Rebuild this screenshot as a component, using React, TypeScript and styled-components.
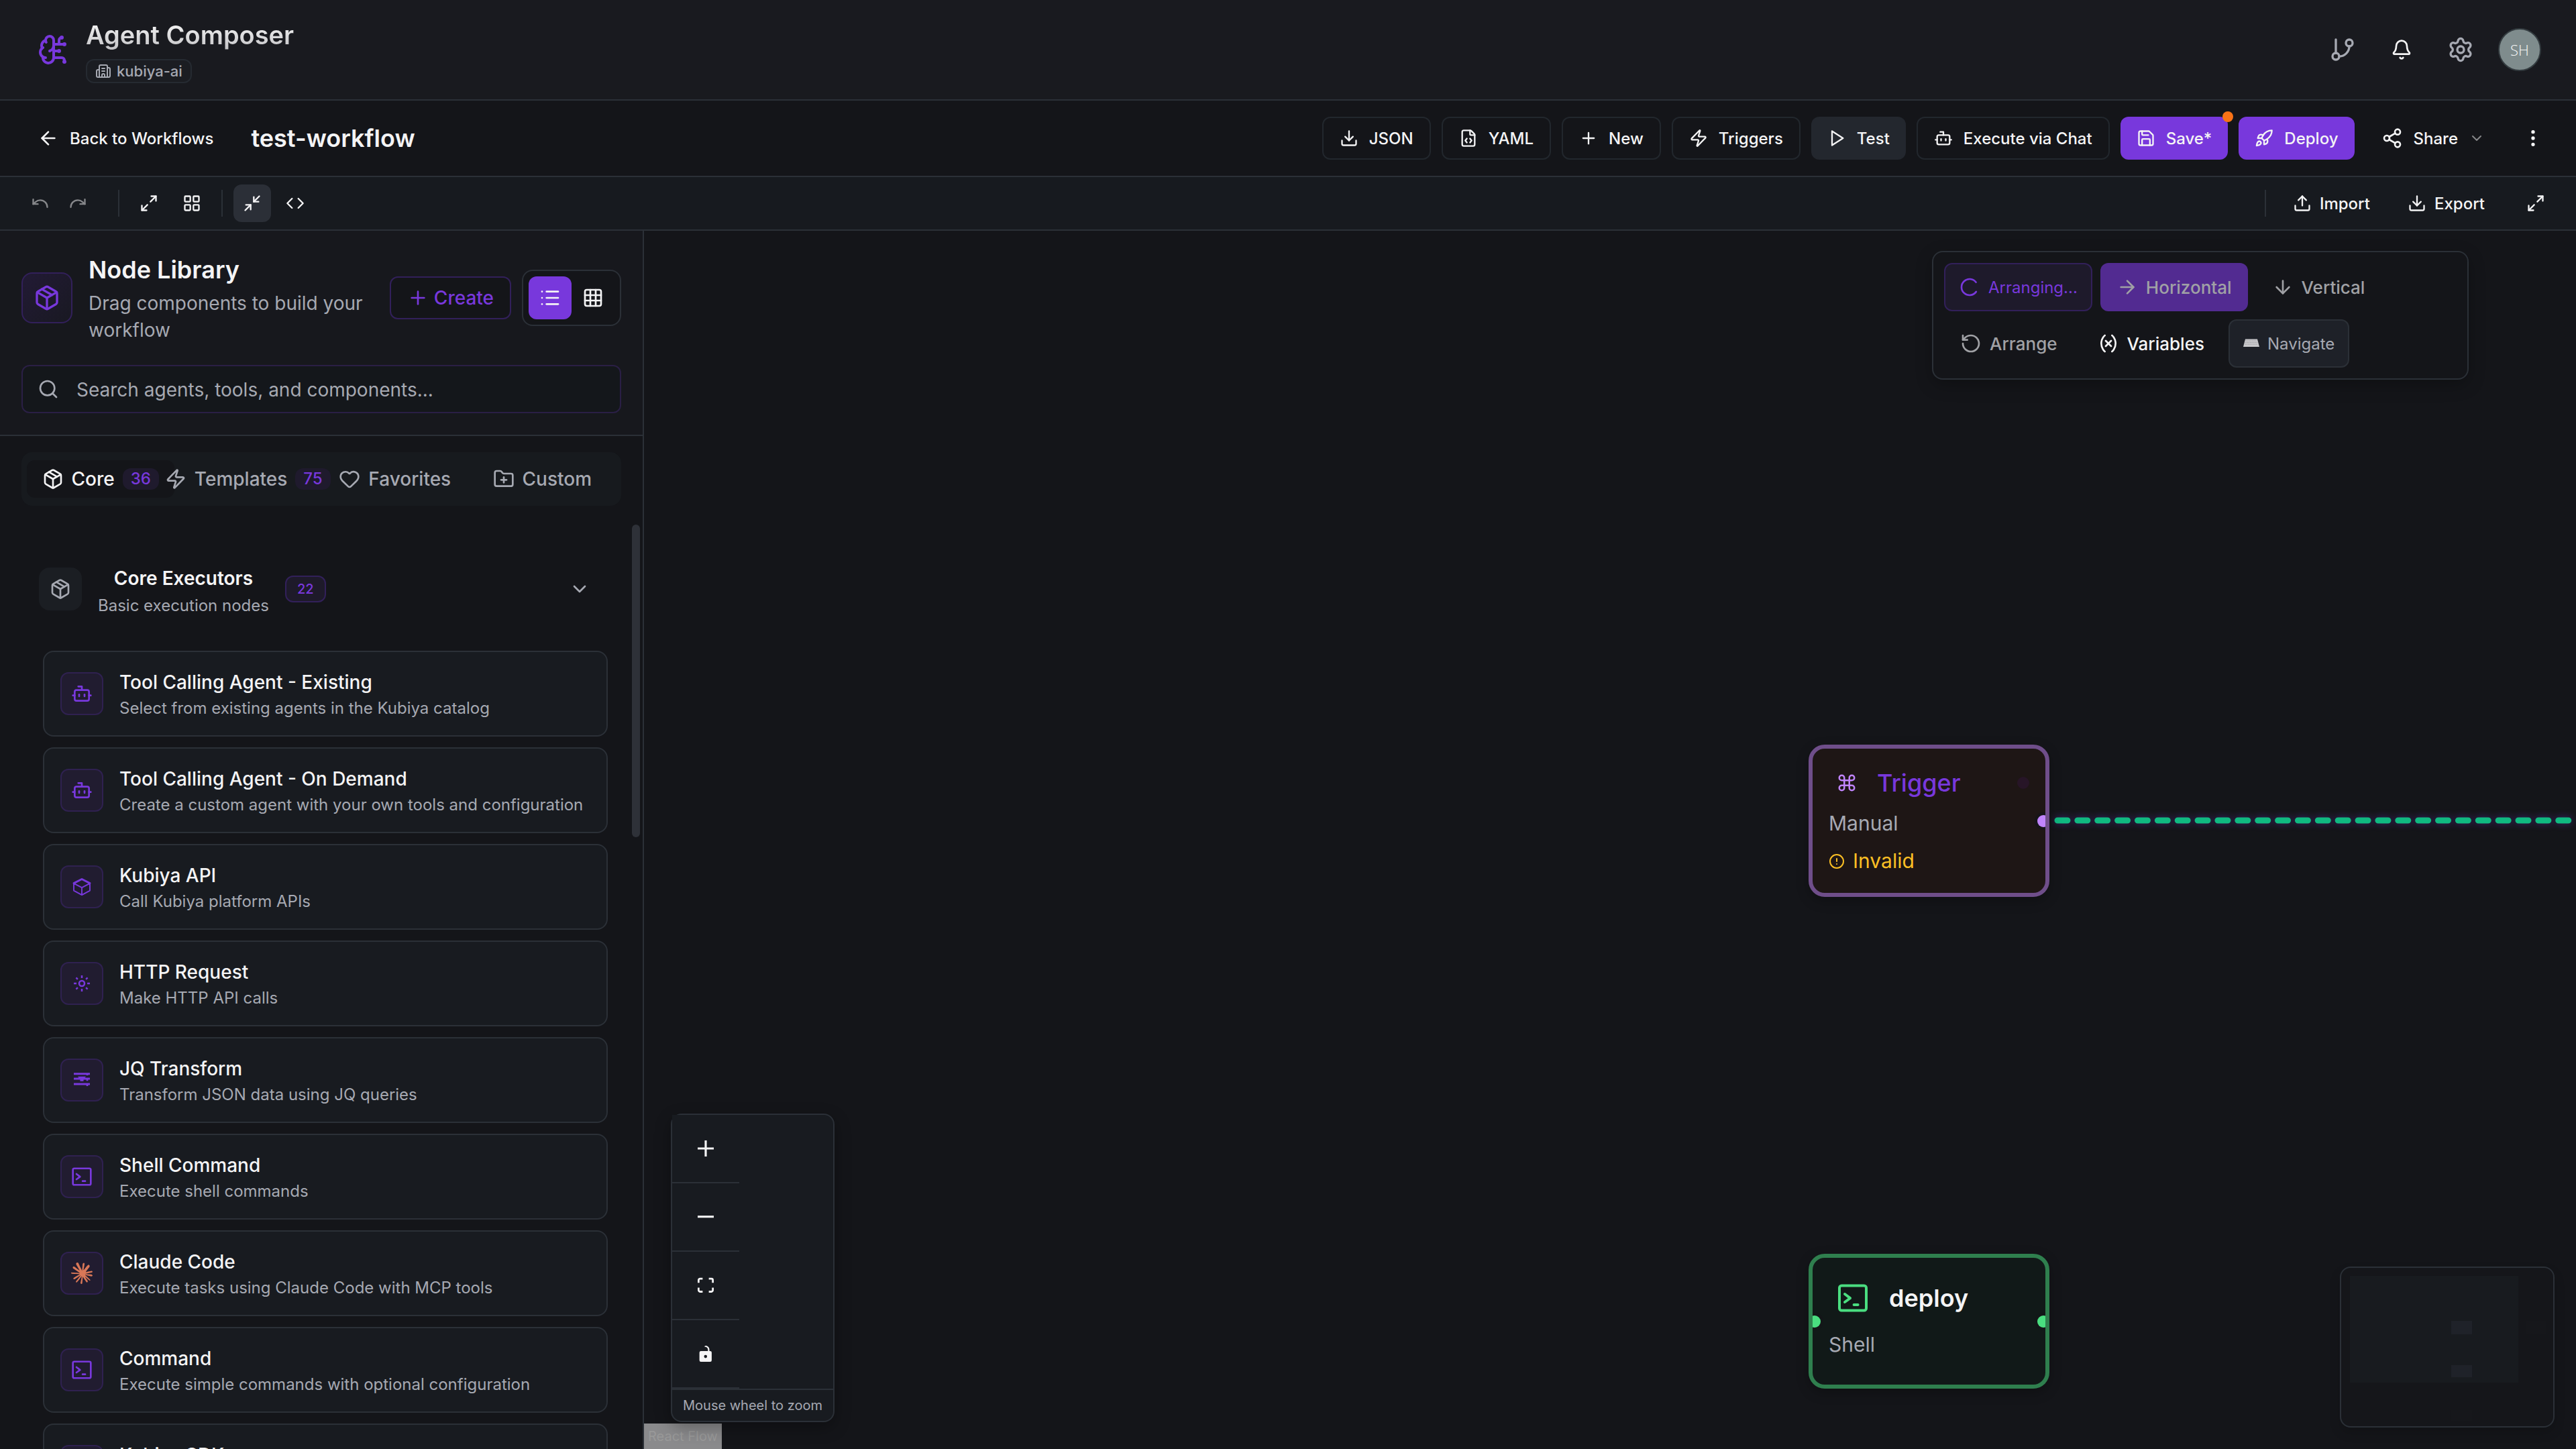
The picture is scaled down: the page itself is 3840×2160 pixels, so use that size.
import React from "react";
import styled, { createGlobalStyle, css } from "styled-components";
import {
  ArrowDown,
  ArrowLeft,
  ArrowRight,
  Bell,
  Bot,
  BrainCircuit,
  Building2,
  ChevronDown,
  CircleAlert,
  Code,
  Command,
  Download,
  EllipsisVertical,
  FileCode,
  FolderPlus,
  GitBranch,
  Grid3x3,
  Heart,
  LayoutGrid,
  List,
  LoaderCircle,
  Maximize2,
  Minimize2,
  Package,
  Plus,
  Redo,
  Rocket,
  RotateCcw,
  Save,
  Search,
  Settings,
  Share2,
  Undo,
  Upload,
  Variable,
  Zap,
} from "lucide-react";
import { SiClaude } from "react-icons/si";

const color = {
  bg: "#141519",
  header: "#191a1f",
  panel: "#17181d",
  card: "#181b20",
  raised: "#1f2229",
  line: "#2b3037",
  lineSoft: "#22272d",
  text: "#f4f4f5",
  muted: "#a6a9b2",
  accent: "#7838dc",
  accentLine: "#32205a",
  accentSoft: "#211c30",
};

const GlobalStyle = createGlobalStyle`
  *, *::before, *::after { box-sizing: border-box; }
  html, body { margin: 0; background: ${color.bg}; }
  body {
    font-family: Inter, "Liberation Sans", sans-serif;
    color: ${color.text};
    -webkit-font-smoothing: antialiased;
  }
  h1, h2, h3, p { margin: 0; }
  button, input { font: inherit; color: inherit; }
  svg { display: block; flex: none; }
`;

/* ---------- page frame ---------- */

const Page = styled.div`
  display: flex;
  flex-direction: column;
  height: 100vh;
  overflow: hidden;
`;

const Bar = styled.header<{ $bg: string; $pad: number; $height: number }>`
  display: flex;
  align-items: center;
  justify-content: space-between;
  flex: none;
  height: ${(p) => p.$height}px;
  padding: 0 ${(p) => p.$pad}px;
  background: ${(p) => p.$bg};
  border-bottom: 2px solid ${color.line};
`;

const Row = styled.div<{ $gap: number }>`
  display: flex;
  align-items: center;
  gap: ${(p) => p.$gap}px;
`;

const Body = styled.div`
  display: flex;
  flex: 1;
  min-height: 0;
`;

/* ---------- app header ---------- */

const Brand = styled.div`
  display: flex;
  align-items: center;
  gap: 24px;
  padding-left: 8px;
  color: ${color.accent};
`;

const BrandText = styled.div`
  display: flex;
  flex-direction: column;
  align-items: flex-start;
  gap: 8px;
`;

const AppTitle = styled.h1`
  font-size: 38px;
  line-height: 56px;
  font-weight: 600;
  background: linear-gradient(180deg, #fafafa 10%, #c2c2c5 90%);
  background-clip: text;
  color: transparent;
`;

const OrgBadge = styled.span`
  display: flex;
  align-items: center;
  gap: 8px;
  height: 36px;
  padding: 0 12px;
  border: 2px solid #252a31;
  border-radius: 12px;
  background: #1b1d22;
  color: ${color.muted};
  font-size: 22px;
  font-weight: 500;
`;

const HeaderIcon = styled.button<{ $bright?: boolean }>`
  display: grid;
  place-items: center;
  width: 72px;
  height: 72px;
  padding: 0;
  border: 0;
  background: none;
  color: ${(p) => (p.$bright ? color.text : color.muted)};
`;

const Avatar = styled.span`
  display: grid;
  place-items: center;
  width: 64px;
  height: 64px;
  border: 2px solid #343c40;
  border-radius: 50%;
  background: #7f8c8d;
  color: #f6f7f7;
  font: 300 22px "Open Sans", "Noto Sans", sans-serif;
`;

/* ---------- workflow bar ---------- */

const BackLink = styled.a`
  display: flex;
  align-items: center;
  gap: 16px;
  padding: 0 24px;
  color: ${color.text};
  font-size: 24px;
  font-weight: 500;
  text-decoration: none;
`;

const WorkflowName = styled.h2`
  font-size: 36px;
  line-height: 44px;
  font-weight: 600;
`;

type Tone = "outline" | "solid" | "primary" | "ghost";

const tones = {
  outline: css`
    border: 2px solid ${color.lineSoft};
    background: transparent;
  `,
  solid: css`
    border: 0;
    background: #23272e;
  `,
  primary: css`
    border: 0;
    background: ${color.accent};
  `,
  ghost: css`
    border: 0;
    background: transparent;
  `,
};

const ActionButton = styled.button<{ $tone: Tone }>`
  position: relative;
  display: flex;
  align-items: center;
  gap: 16px;
  height: 64px;
  padding: 0 24px;
  border-radius: 12px;
  font-size: 24px;
  font-weight: 500;
  white-space: nowrap;
  ${(p) => tones[p.$tone]}
`;

const UnsavedDot = styled.span`
  position: absolute;
  top: -8px;
  right: -8px;
  width: 16px;
  height: 16px;
  border-radius: 50%;
  background: #f97316;
`;

const SquareButton = styled.button<{ $size: number; $active?: boolean; $dim?: boolean }>`
  display: grid;
  place-items: center;
  width: ${(p) => p.$size}px;
  height: ${(p) => p.$size}px;
  padding: 0;
  border: 0;
  border-radius: 12px;
  background: ${(p) => (p.$active ? "#2b2f37" : "transparent")};
  opacity: ${(p) => (p.$dim ? 0.5 : 1)};
`;

/* ---------- tool strip ---------- */

const Separator = styled.span`
  width: 2px;
  height: 40px;
  background: ${color.line};
`;

const History = styled.div`
  display: flex;
  padding-right: 16px;
`;

const TransferButton = styled.button`
  display: flex;
  align-items: center;
  gap: 12px;
  height: 56px;
  padding: 0 24px;
  border: 0;
  background: none;
  font-size: 24px;
  font-weight: 500;
`;

const Transfers = styled.div`
  display: flex;
  gap: 8px;
  padding-right: 8px;
`;

/* ---------- sidebar ---------- */

const Sidebar = styled.aside`
  display: flex;
  flex-direction: column;
  flex: none;
  width: 25%;
  min-width: 960px;
  border-right: 2px solid ${color.line};
  background: ${color.bg};
`;

const LibraryHead = styled.div`
  display: flex;
  flex-direction: column;
  gap: 32px;
  padding: 32px;
  border-bottom: 2px solid ${color.line};
  background: ${color.panel};
`;

const LibraryIcon = styled.span`
  display: grid;
  place-items: center;
  flex: none;
  width: 76px;
  height: 76px;
  border: 2px solid ${color.accentLine};
  border-radius: 16px;
  background: linear-gradient(135deg, #221a35, #191922);
  color: ${color.accent};
`;

const LibraryTitle = styled.h2`
  padding-bottom: 4px;
  font-size: 36px;
  line-height: 52px;
  font-weight: 600;
`;

const LibraryHint = styled.p`
  color: ${color.muted};
  font-size: 28px;
  line-height: 40px;
`;

const LibraryTop = styled.div`
  display: flex;
  align-items: center;
  gap: 16px;
`;

const LibraryText = styled.div`
  flex: 1;
  min-width: 0;
  padding-left: 8px;
`;

const CreateButton = styled.button`
  display: flex;
  align-items: center;
  gap: 8px;
  height: 64px;
  padding: 0 24px;
  border: 2px solid ${color.accentLine};
  border-radius: 12px;
  background: ${color.bg};
  color: ${color.accent};
  font-size: 28px;
  font-weight: 500;
`;

const ViewSwitch = styled.div`
  display: flex;
  padding: 8px;
  border: 2px solid ${color.line};
  border-radius: 16px;
  background: ${color.bg};
`;

const ViewButton = styled.button<{ $on?: boolean }>`
  display: grid;
  place-items: center;
  width: 64px;
  height: 64px;
  padding: 0;
  border: 0;
  border-radius: 12px;
  background: ${(p) => (p.$on ? color.accent : "transparent")};
`;

const SearchBox = styled.label`
  display: flex;
  align-items: center;
  gap: 24px;
  height: 72px;
  padding: 0 22px;
  border: 2px solid #2a1f45;
  border-radius: 12px;
  background: #14171b;
  color: ${color.muted};
`;

const SearchInput = styled.input`
  flex: 1;
  min-width: 0;
  padding: 2px 0 0 2px;
  border: 0;
  outline: 0;
  background: none;
  font-size: 28px;
  line-height: 40px;
  &::placeholder { color: ${color.muted}; opacity: 1; }
`;

const Tabs = styled.div`
  display: grid;
  grid-template-columns: repeat(4, minmax(0, 1fr));
  align-items: center;
  height: 80px;
  margin: 24px 32px;
  padding: 0 8px;
  border-radius: 16px;
  background: #171a1e;
`;

const Tab = styled.button<{ $on?: boolean }>`
  display: flex;
  align-items: center;
  justify-content: center;
  gap: 12px;
  height: 56px;
  padding: 0;
  border: 0;
  border-radius: 12px;
  background: ${(p) => (p.$on ? color.bg : "transparent")};
  color: ${(p) => (p.$on ? color.text : color.muted)};
  font-size: 28px;
  font-weight: 500;
  white-space: nowrap;
`;

const TabCount = styled.span`
  height: 32px;
  padding: 0 12px;
  border-radius: 12px;
  background: #1f1a2d;
  color: ${color.accent};
  font-size: 24px;
  line-height: 32px;
`;

const ScrollArea = styled.div`
  position: relative;
  flex: 1;
  min-height: 0;
  overflow: hidden;
  padding: 32px 52px 0 32px;
`;

const ScrollThumb = styled.span`
  position: absolute;
  top: 4px;
  right: 4px;
  width: 12px;
  height: 466px;
  border-radius: 6px;
  background: #2e3138;
`;

const SectionHead = styled.button`
  display: flex;
  align-items: center;
  gap: 24px;
  width: 100%;
  padding: 24px;
  border: 2px solid transparent;
  background: none;
`;

const SectionIcon = styled.span`
  display: grid;
  place-items: center;
  width: 64px;
  height: 64px;
  border-radius: 16px;
  background: #1b1e23;
  color: ${color.muted};
`;

const SectionText = styled.span`
  display: flex;
  flex-direction: column;
  gap: 4px;
  padding-top: 6px;
  text-align: center;
`;

const SectionTitle = styled.span`
  font-size: 28px;
  line-height: 40px;
  font-weight: 600;
`;

const Caption = styled.span`
  color: ${color.muted};
  font-size: 24px;
  line-height: 34px;
`;

const SectionCount = styled.span`
  height: 40px;
  padding: 0 16px;
  border: 2px solid ${color.accentLine};
  border-radius: 12px;
  background: #1e1a2a;
  color: ${color.accent};
  font-size: 20px;
  line-height: 36px;
  font-weight: 500;
`;

const SectionChevron = styled.span`
  margin-left: auto;
  color: ${color.muted};
`;

const CardList = styled.ul`
  display: flex;
  flex-direction: column;
  gap: 16px;
  margin: 24px 0 0 32px;
  padding: 0;
  list-style: none;
`;

const Card = styled.li`
  display: flex;
  align-items: center;
  flex: none;
  gap: 24px;
  height: 128px;
  padding: 0 24px;
  border: 2px solid ${color.line};
  border-radius: 16px;
  background: ${color.card};
`;

const CardIcon = styled.span`
  display: grid;
  place-items: center;
  flex: none;
  width: 64px;
  height: 64px;
  border: 2px solid #2f2150;
  border-radius: 12px;
  background: ${color.accentSoft};
  color: ${color.accent};
`;

const CardText = styled.div`
  display: flex;
  flex-direction: column;
  gap: 4px;
  padding-top: 4px;
  white-space: nowrap;
`;

const CardTitle = styled.h3`
  font-size: 28px;
  line-height: 36px;
  font-weight: 500;
`;

/* ---------- canvas ---------- */

const Canvas = styled.main`
  position: relative;
  flex: 1;
  min-width: 0;
  overflow: hidden;
  background: ${color.bg};
`;

const LayoutPanel = styled.div`
  position: absolute;
  top: 30px;
  right: 160px;
  display: flex;
  flex-wrap: wrap;
  gap: 12px;
  width: 800px;
  padding: 16px;
  border: 2px solid ${color.line};
  border-radius: 16px;
  background: ${color.bg};
  box-shadow: 0 8px 24px rgba(0, 0, 0, 0.25);
`;

const PanelButton = styled.button<{ $on?: boolean; $enabled?: boolean }>`
  display: flex;
  align-items: center;
  gap: 12px;
  height: 72px;
  padding: 0 24px;
  border: 0;
  border-radius: 12px;
  background: ${(p) => (p.$on ? "#522b91" : "transparent")};
  color: ${(p) => (p.$enabled ? color.text : "#a0a1a5")};
  font-size: 26px;
  font-weight: 500;
`;

const PanelChip = styled.span<{ $accent?: boolean }>`
  display: flex;
  align-items: center;
  gap: 12px;
  height: 72px;
  padding: 0 20px;
  border: 2px solid ${(p) => (p.$accent ? color.accentLine : color.line)};
  border-radius: 12px;
  background: ${(p) => (p.$accent ? "#1e1a2b" : "#1e2128")};
  color: ${(p) => (p.$accent ? color.accent : color.muted)};
  font-size: 24px;
`;

const Spinner = styled(LoaderCircle)`
  transform: rotate(35deg);
`;

const FlowNode = styled.div<{ $x: number; $y: number; $line: string; $bg: string }>`
  position: absolute;
  left: ${(p) => p.$x}px;
  top: ${(p) => p.$y}px;
  display: flex;
  flex-direction: column;
  gap: 12px;
  width: 359px;
  min-height: 201px;
  padding: 24px;
  overflow: hidden;
  border: 6px solid ${(p) => p.$line};
  border-radius: 24px;
  background: ${(p) => p.$bg};
  box-shadow: 0 6px 18px rgba(0, 0, 0, 0.25);
`;

const NodeHead = styled.div`
  display: flex;
  align-items: center;
  gap: 18px;
`;

const NodeIcon = styled.span<{ $color: string }>`
  padding: 12px;
  color: ${(p) => p.$color};
`;

const NodeTitle = styled.h3<{ $color: string; $weight: number }>`
  flex: 1;
  color: ${(p) => p.$color};
  font-size: 36px;
  line-height: 52px;
  font-weight: ${(p) => p.$weight};
`;

const NodeStatus = styled.span`
  width: 18px;
  height: 18px;
  border-radius: 50%;
  background: #271527;
`;

const NodeKind = styled.p`
  color: ${color.muted};
  font-size: 30px;
  line-height: 42px;
`;

const NodeWarning = styled.p`
  display: flex;
  align-items: center;
  gap: 12px;
  color: #fbbf24;
  font-size: 30px;
  line-height: 47px;
`;

const Handle = styled.span<{ $side: "left" | "right"; $color: string }>`
  position: absolute;
  top: calc(50% - 9px);
  ${(p) => p.$side}: -6px;
  width: 18px;
  height: 18px;
  border-radius: 50%;
  background: ${(p) => p.$color};
  box-shadow: 0 0 0 4px rgba(20, 21, 25, 0.8);
`;

const Edge = styled.svg`
  position: absolute;
  left: 2102px;
  top: 859px;
  width: calc(100% - 2102px);
  height: 40px;
  filter: drop-shadow(0 0 6px rgba(124, 58, 237, 0.4));
`;

const Controls = styled.div`
  position: absolute;
  left: 40px;
  bottom: 40px;
  display: flex;
  flex-direction: column;
  border: 2px solid ${color.line};
  border-radius: 16px;
  background: ${color.card};
  box-shadow: 0 8px 24px rgba(0, 0, 0, 0.3);
`;

const ControlButton = styled.button`
  display: grid;
  place-items: center;
  width: 100px;
  height: 102px;
  padding: 0;
  border: 0;
  border-bottom: 2px solid ${color.line};
  background: ${color.card};
`;

const ControlHint = styled.p`
  padding: 8px 16px;
  border-top: 2px solid ${color.line};
  color: ${color.muted};
  font-size: 20px;
  line-height: 30px;
`;

const Attribution = styled.a`
  position: absolute;
  left: 0;
  bottom: 0;
  padding: 4px 6px;
  background: rgba(255, 255, 255, 0.5);
  color: #999;
  font-size: 20px;
  line-height: 30px;
  text-decoration: none;
`;

const MiniMap = styled.div`
  position: absolute;
  right: 32px;
  bottom: 32px;
  width: 320px;
  height: 240px;
  overflow: hidden;
  border: 2px solid ${color.line};
  border-radius: 16px;
  background: #15161a;
  box-shadow: 0 8px 16px rgba(0, 0, 0, 0.15);
`;

/* ---------- drawings ---------- */

const PlayIcon = () => (
  <svg width={28} height={28} viewBox="0 0 24 24" fill="none" stroke="currentColor" strokeWidth={2} strokeLinejoin="round">
    <path d="M6 3l14 9-14 9z" />
  </svg>
);

const TerminalIcon = ({ size }: { size: number }) => (
  <svg width={size} height={size} viewBox="0 0 24 24" fill="none" stroke="currentColor" strokeWidth={2} strokeLinecap="round" strokeLinejoin="round">
    <rect x={2} y={2.8} width={20} height={18.4} rx={1.6} />
    <path d="M6 9l4 3.1L6 15M12.8 17h3" />
  </svg>
);

const CubeIcon = () => (
  <svg width={32} height={32} viewBox="0 0 24 24" fill="none" stroke="currentColor" strokeLinejoin="round" strokeLinecap="round">
    <path d="M3 8v8.2l9 4.9 9-4.9V8M3 8.2l9 4.6 9-4.6M12 12.8v8.2" strokeWidth={1.4} />
    <path d="M3 8l9-4.6L21 8" strokeWidth={2.2} />
  </svg>
);

const BurstIcon = () => (
  <svg width={32} height={32} viewBox="0 0 24 24" fill="none" stroke="currentColor" strokeWidth={1.9}>
    <circle cx={12} cy={12} r={3} />
    <path d="M12 3v3M12 18v3M3 12h3M18 12h3M5.6 5.6l1.8 1.8M16.6 16.6l1.8 1.8M18.4 5.6l-1.8 1.8M7.4 16.6l-1.8 1.8" />
  </svg>
);

const QueryIcon = () => (
  <svg width={32} height={32} viewBox="0 0 24 24" fill="currentColor">
    <path d="M3 3.9h18v2.2H3zM3 9.4h18v2.2H3zM3 15.4h18v2.2H3z" />
    <path d="M7.5 8h9l-2.6 3.6v1.8h-3.8v-1.8zM17 5h2v1.8h-2zM17 11h2v2h-2zM17 17h2v1.8h-2z" />
  </svg>
);

const KeyboardIcon = () => (
  <svg width={24} height={24} viewBox="0 0 24 24">
    <path d="M3 5.5h18l3 11.5H0z" fill="#c9c9cc" />
    <path d="M3.4 8h17.2M2.8 10.6h18.4M2.2 13.2h19.6" stroke="#a2a2a6" strokeWidth={1} strokeDasharray="1.6 0.8" />
  </svg>
);

const ControlGlyph = ({ box, d, height = 24 }: { box: string; d: string; height?: number }) => (
  <svg width={24} height={height} viewBox={box} fill={color.text}>
    <path d={d} />
  </svg>
);

/* ---------- data ---------- */

const actions: { label: string; tone: Tone; icon: React.ReactNode; unsaved?: boolean }[] = [
  { label: "JSON", tone: "outline", icon: <Download size={28} /> },
  { label: "YAML", tone: "outline", icon: <FileCode size={28} /> },
  { label: "New", tone: "outline", icon: <Plus size={28} /> },
  { label: "Triggers", tone: "outline", icon: <Zap size={28} /> },
  { label: "Test", tone: "solid", icon: <PlayIcon /> },
  { label: "Execute via Chat", tone: "outline", icon: <Bot size={28} /> },
  { label: "Save*", tone: "primary", icon: <Save size={28} />, unsaved: true },
  { label: "Deploy", tone: "primary", icon: <Rocket size={28} /> },
];

const nodes: { title: string; text: string; icon: React.ReactNode }[] = [
  { title: "Tool Calling Agent - Existing", text: "Select from existing agents in the Kubiya catalog", icon: <Bot size={32} /> },
  { title: "Tool Calling Agent - On Demand", text: "Create a custom agent with your own tools and configuration", icon: <Bot size={32} /> },
  { title: "Kubiya API", text: "Call Kubiya platform APIs", icon: <CubeIcon /> },
  { title: "HTTP Request", text: "Make HTTP API calls", icon: <BurstIcon /> },
  { title: "JQ Transform", text: "Transform JSON data using JQ queries", icon: <QueryIcon /> },
  { title: "Shell Command", text: "Execute shell commands", icon: <TerminalIcon size={32} /> },
  { title: "Claude Code", text: "Execute tasks using Claude Code with MCP tools", icon: <SiClaude size={32} color="#d97757" /> },
  { title: "Command", text: "Execute simple commands with optional configuration", icon: <TerminalIcon size={32} /> },
  { title: "Kubiya SDK", text: "Run workflows with the Kubiya SDK", icon: <CubeIcon /> },
];

/* ---------- views ---------- */

function AppHeader() {
  return (
    <Bar $bg={color.header} $pad={48} $height={150}>
      <Brand>
        <BrainCircuit size={48} />
        <BrandText>
          <AppTitle>Agent Composer</AppTitle>
          <OrgBadge>
            <Building2 size={24} />
            kubiya-ai
          </OrgBadge>
        </BrandText>
      </Brand>
      <Row $gap={16}>
        <HeaderIcon aria-label="Branches"><GitBranch size={40} /></HeaderIcon>
        <HeaderIcon aria-label="Notifications" $bright><Bell size={32} /></HeaderIcon>
        <HeaderIcon aria-label="Settings"><Settings size={40} /></HeaderIcon>
        <HeaderIcon aria-label="Account"><Avatar>SH</Avatar></HeaderIcon>
      </Row>
    </Bar>
  );
}

function WorkflowBar() {
  return (
    <Bar as="div" $bg={color.bg} $pad={32} $height={114}>
      <Row $gap={32}>
        <BackLink href="#workflows">
          <ArrowLeft size={32} />
          Back to Workflows
        </BackLink>
        <WorkflowName>test-workflow</WorkflowName>
      </Row>
      <Row $gap={16}>
        {actions.map((a) => (
          <ActionButton key={a.label} $tone={a.tone}>
            {a.icon}
            {a.label}
            {a.unsaved && <UnsavedDot />}
          </ActionButton>
        ))}
        <ActionButton $tone="ghost">
          <Share2 size={32} />
          Share
          <ChevronDown size={24} opacity={0.5} />
        </ActionButton>
        <SquareButton $size={64} aria-label="More"><EllipsisVertical size={32} /></SquareButton>
      </Row>
    </Bar>
  );
}

function ToolStrip() {
  return (
    <Bar as="div" $bg="#171a1f" $pad={32} $height={80}>
      <Row $gap={16}>
        <History>
          <SquareButton $size={56} $dim aria-label="Undo"><Undo size={28} /></SquareButton>
          <SquareButton $size={56} $dim aria-label="Redo"><Redo size={28} /></SquareButton>
        </History>
        <Separator />
        <Row $gap={8}>
          <SquareButton $size={56} aria-label="Fit view"><Maximize2 size={28} /></SquareButton>
          <SquareButton $size={56} aria-label="Grid"><LayoutGrid size={28} /></SquareButton>
        </Row>
        <Separator />
        <Row $gap={8}>
          <SquareButton $size={56} $active aria-label="Compact"><Minimize2 size={28} /></SquareButton>
          <SquareButton $size={56} aria-label="Code"><Code size={28} /></SquareButton>
        </Row>
      </Row>
      <Row $gap={16}>
        <Separator />
        <Transfers>
          <TransferButton><Upload size={28} />Import</TransferButton>
          <TransferButton><Download size={28} />Export</TransferButton>
        </Transfers>
        <SquareButton $size={56} aria-label="Full screen"><Maximize2 size={28} /></SquareButton>
      </Row>
    </Bar>
  );
}

function NodeLibrary() {
  return (
    <Sidebar>
      <LibraryHead>
        <LibraryTop>
          <LibraryIcon><Package size={40} /></LibraryIcon>
          <LibraryText>
            <LibraryTitle>Node Library</LibraryTitle>
            <LibraryHint>Drag components to build your workflow</LibraryHint>
          </LibraryText>
          <CreateButton><Plus size={32} />Create</CreateButton>
          <ViewSwitch>
            <ViewButton $on aria-label="List view"><List size={32} /></ViewButton>
            <ViewButton aria-label="Grid view"><Grid3x3 size={32} /></ViewButton>
          </ViewSwitch>
        </LibraryTop>
        <SearchBox>
          <Search size={32} />
          <SearchInput type="text" aria-label="Search nodes" placeholder="Search agents, tools, and components..." />
        </SearchBox>
      </LibraryHead>
      <Tabs role="tablist">
        <Tab role="tab" aria-selected $on><Package size={32} />Core<TabCount>36</TabCount></Tab>
        <Tab role="tab"><Zap size={32} />Templates<TabCount>75</TabCount></Tab>
        <Tab role="tab"><Heart size={32} />Favorites</Tab>
        <Tab role="tab"><FolderPlus size={32} />Custom</Tab>
      </Tabs>
      <ScrollArea>
        <SectionHead>
          <SectionIcon><Package size={32} /></SectionIcon>
          <SectionText>
            <SectionTitle>Core Executors</SectionTitle>
            <Caption>Basic execution nodes</Caption>
          </SectionText>
          <SectionCount>22</SectionCount>
          <SectionChevron><ChevronDown size={32} /></SectionChevron>
        </SectionHead>
        <CardList>
          {nodes.map((n) => (
            <Card key={n.title} draggable>
              <CardIcon>{n.icon}</CardIcon>
              <CardText>
                <CardTitle>{n.title}</CardTitle>
                <Caption>{n.text}</Caption>
              </CardText>
            </Card>
          ))}
        </CardList>
        <ScrollThumb />
      </ScrollArea>
    </Sidebar>
  );
}

function FlowCanvas() {
  return (
    <Canvas>
      <Edge aria-hidden>
        <line x1={5} y1={20} x2="100%" y2={20} stroke="#10b981" strokeWidth={9} strokeLinecap="round" strokeDasharray="15 14.87" />
      </Edge>

      <FlowNode $x={1736} $y={766} $line="#6f4e8a" $bg="#1e1615">
        <NodeHead>
          <NodeIcon $color="#c084fc"><Command size={30} /></NodeIcon>
          <NodeTitle $color={color.accent} $weight={500}>Trigger</NodeTitle>
          <NodeStatus />
        </NodeHead>
        <NodeKind>Manual</NodeKind>
        <NodeWarning><CircleAlert size={24} />Invalid</NodeWarning>
        <Handle $side="right" $color="#c084fc" />
      </FlowNode>

      <FlowNode $x={1736} $y={1525} $line="#2f7f4e" $bg="#111918">
        <NodeHead>
          <NodeIcon $color="#4ade80"><TerminalIcon size={48} /></NodeIcon>
          <NodeTitle $color={color.text} $weight={600}>deploy</NodeTitle>
        </NodeHead>
        <NodeKind>Shell</NodeKind>
        <Handle $side="left" $color="#4ade80" />
        <Handle $side="right" $color="#4ade80" />
      </FlowNode>

      <LayoutPanel>
        <PanelChip $accent><Spinner size={32} />Arranging...</PanelChip>
        <PanelButton $on><ArrowRight size={32} />Horizontal</PanelButton>
        <PanelButton><ArrowDown size={32} />Vertical</PanelButton>
        <PanelButton><RotateCcw size={32} />Arrange</PanelButton>
        <PanelButton $enabled><Variable size={32} />Variables</PanelButton>
        <PanelChip><KeyboardIcon />Navigate</PanelChip>
      </LayoutPanel>

      <Attribution href="#react-flow">React Flow</Attribution>
      <Controls>
        <ControlButton aria-label="Zoom in">
          <ControlGlyph box="0 0 32 32" d="M32 18.133H18.133V32h-4.266V18.133H0v-4.266h13.867V0h4.266v13.867H32z" />
        </ControlButton>
        <ControlButton aria-label="Zoom out">
          <ControlGlyph box="0 0 32 5" height={4} d="M0 0h32v4.2H0z" />
        </ControlButton>
        <ControlButton aria-label="Fit view">
          <ControlGlyph
            box="0 0 32 30"
            d="M3.692 4.63c0-.53.4-.938.939-.938h5.215V0H4.708C2.13 0 0 2.054 0 4.63v5.216h3.692V4.631zM27.354 0h-5.2v3.692h5.17c.53 0 .984.4.984.939v5.215H32V4.631A4.624 4.624 0 0027.354 0zm.954 24.83c0 .532-.4.94-.939.94h-5.215v3.768h5.215c2.577 0 4.631-2.13 4.631-4.707v-5.139h-3.692v5.139zm-23.677.94c-.531 0-.939-.4-.939-.94v-5.138H0v5.139c0 2.577 2.13 4.707 4.708 4.707h5.138V25.77H4.631z"
          />
        </ControlButton>
        <ControlButton aria-label="Toggle interactivity">
          <ControlGlyph
            box="0 0 25 32"
            d="M21.333 10.667H19.81V7.619C19.81 3.429 16.38 0 12.19 0c-4.114 1.828-1.37 2.133.305 2.438 1.676.305 4.42 2.59 4.42 5.181v3.048H3.047A3.056 3.056 0 000 13.714v15.238A3.056 3.056 0 003.048 32h18.285a3.056 3.056 0 003.048-3.048V13.714a3.056 3.056 0 00-3.048-3.047zM12.19 24.533a3.056 3.056 0 01-3.047-3.047 3.056 3.056 0 013.047-3.048 3.056 3.056 0 013.048 3.048 3.056 3.056 0 01-3.048 3.047z"
          />
        </ControlButton>
        <ControlHint>Mouse wheel to zoom</ControlHint>
      </Controls>

      <MiniMap>
        <svg width="100%" height="100%" viewBox="0 0 316 236">
          <rect x={13} y={12} width={251} height={159} fill="#181b1f" />
          <rect x={164} y={79} width={31} height={20} fill="#1f2229" />
          <rect x={164} y={145} width={31} height={18} fill="#1f2229" />
          <rect x={275} y={79} width={31} height={20} fill="#16171b" />
          <rect x={164} y={212} width={31} height={17} fill="#16171b" />
        </svg>
      </MiniMap>
    </Canvas>
  );
}

export default function App() {
  return (
    <Page>
      <GlobalStyle />
      <AppHeader />
      <WorkflowBar />
      <ToolStrip />
      <Body>
        <NodeLibrary />
        <FlowCanvas />
      </Body>
    </Page>
  );
}
